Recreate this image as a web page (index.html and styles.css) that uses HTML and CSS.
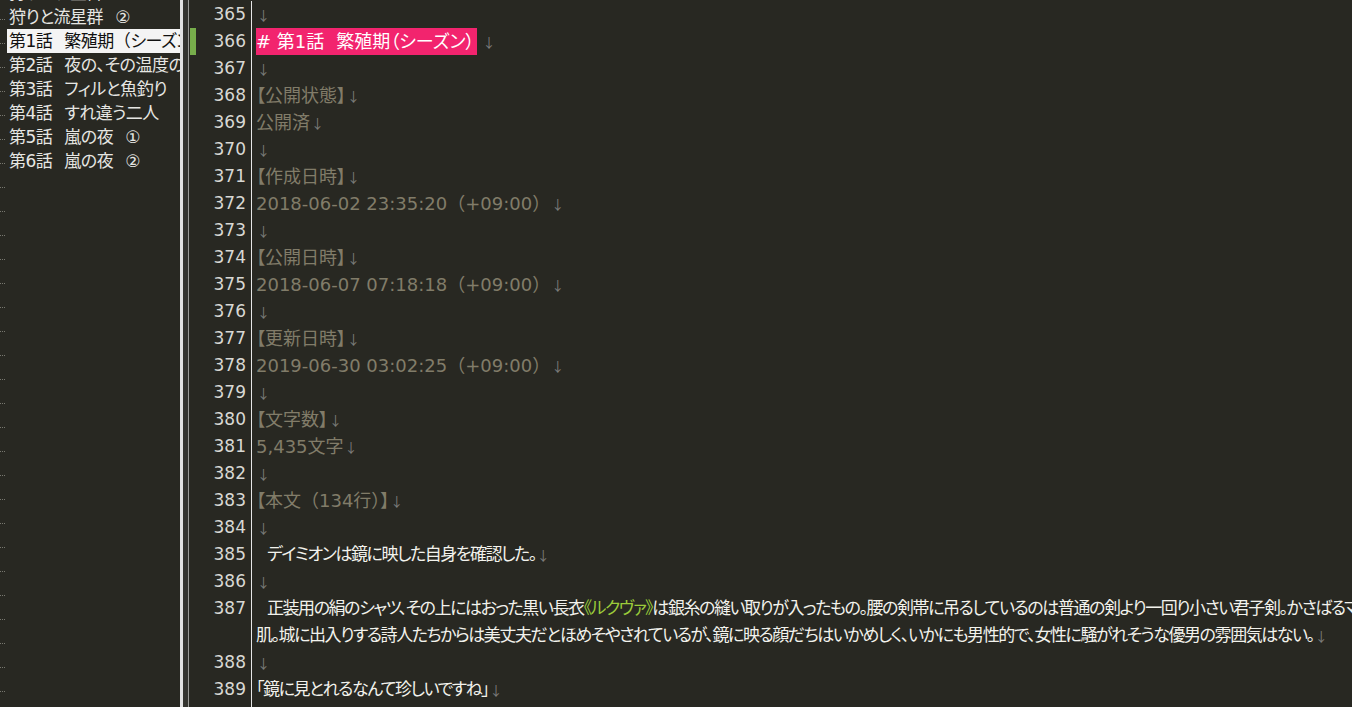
FILE: index.html
```html
<!DOCTYPE html>
<html lang="ja">
<head>
<meta charset="utf-8">
<title>Editor</title>
<link rel="stylesheet" href="styles.css">
</head>
<body>
<div class="app">
  <aside class="outline">
    <div class="orow"><span class="dots"></span><span class="otext">狩りと流星群<span class="isp">　</span>①</span></div>
    <div class="orow"><span class="dots"></span><span class="otext">狩りと流星群<span class="isp">　</span>②</span></div>
    <div class="orow selected"><span class="dots"></span><span class="otext">第1話<span class="isp">　</span>繁殖期<span class="fw">（</span>シーズン）</span></div>
    <div class="orow"><span class="dots"></span><span class="otext">第2話<span class="isp">　</span>夜の、その温度の</span></div>
    <div class="orow"><span class="dots"></span><span class="otext">第3話<span class="isp">　</span>フィルと魚釣り</span></div>
    <div class="orow"><span class="dots"></span><span class="otext">第4話<span class="isp">　</span>すれ違う二人</span></div>
    <div class="orow"><span class="dots"></span><span class="otext">第5話<span class="isp">　</span>嵐の夜<span class="isp">　</span>①</span></div>
    <div class="orow"><span class="dots"></span><span class="otext">第6話<span class="isp">　</span>嵐の夜<span class="isp">　</span>②</span></div>
    <div class="orow"><span class="dots"></span></div>
    <div class="orow"><span class="dots"></span></div>
    <div class="orow"><span class="dots"></span></div>
    <div class="orow"><span class="dots"></span></div>
    <div class="orow"><span class="dots"></span></div>
    <div class="orow"><span class="dots"></span></div>
    <div class="orow"><span class="dots"></span></div>
    <div class="orow"><span class="dots"></span></div>
    <div class="orow"><span class="dots"></span></div>
    <div class="orow"><span class="dots"></span></div>
    <div class="orow"><span class="dots"></span></div>
    <div class="orow"><span class="dots"></span></div>
    <div class="orow"><span class="dots"></span></div>
    <div class="orow"><span class="dots"></span></div>
    <div class="orow"><span class="dots"></span></div>
    <div class="orow"><span class="dots"></span></div>
    <div class="orow"><span class="dots"></span></div>
    <div class="orow"><span class="dots"></span></div>
    <div class="orow"><span class="dots"></span></div>
    <div class="orow"><span class="dots"></span></div>
    <div class="orow"><span class="dots"></span></div>
    <div class="orow"><span class="dots"></span></div>
    <div class="orow"><span class="dots"></span></div>
  </aside>
  <div class="splitter"><span class="sp-a"></span><span class="sp-b"></span><span class="sp-c"></span></div>
  <main class="editor">
    <div class="line"><div class="gutter"><span class="ln">365</span></div><div class="text"><span class="eol">↓</span></div></div>
    <div class="line current"><div class="gutter"><span class="mark"></span><span class="ln">366</span></div><div class="text"><span class="heading"># 第1話<span class="hsp">　</span>繁殖期（シーズン）</span><span class="eol after-heading">↓</span></div></div>
    <div class="line"><div class="gutter"><span class="ln">367</span></div><div class="text"><span class="eol">↓</span></div></div>
    <div class="line"><div class="gutter"><span class="ln">368</span></div><div class="text meta">【公開状態】<span class="eol">↓</span></div></div>
    <div class="line"><div class="gutter"><span class="ln">369</span></div><div class="text meta">公開済<span class="eol">↓</span></div></div>
    <div class="line"><div class="gutter"><span class="ln">370</span></div><div class="text"><span class="eol">↓</span></div></div>
    <div class="line"><div class="gutter"><span class="ln">371</span></div><div class="text meta">【作成日時】<span class="eol">↓</span></div></div>
    <div class="line"><div class="gutter"><span class="ln">372</span></div><div class="text meta">2018-06-02 23:35:20<span class="fw">（+09:00）</span><span class="eol">↓</span></div></div>
    <div class="line"><div class="gutter"><span class="ln">373</span></div><div class="text"><span class="eol">↓</span></div></div>
    <div class="line"><div class="gutter"><span class="ln">374</span></div><div class="text meta">【公開日時】<span class="eol">↓</span></div></div>
    <div class="line"><div class="gutter"><span class="ln">375</span></div><div class="text meta">2018-06-07 07:18:18<span class="fw">（+09:00）</span><span class="eol">↓</span></div></div>
    <div class="line"><div class="gutter"><span class="ln">376</span></div><div class="text"><span class="eol">↓</span></div></div>
    <div class="line"><div class="gutter"><span class="ln">377</span></div><div class="text meta">【更新日時】<span class="eol">↓</span></div></div>
    <div class="line"><div class="gutter"><span class="ln">378</span></div><div class="text meta">2019-06-30 03:02:25<span class="fw">（+09:00）</span><span class="eol">↓</span></div></div>
    <div class="line"><div class="gutter"><span class="ln">379</span></div><div class="text"><span class="eol">↓</span></div></div>
    <div class="line"><div class="gutter"><span class="ln">380</span></div><div class="text meta">【文字数】<span class="eol">↓</span></div></div>
    <div class="line"><div class="gutter"><span class="ln">381</span></div><div class="text meta">5,435文字<span class="eol">↓</span></div></div>
    <div class="line"><div class="gutter"><span class="ln">382</span></div><div class="text"><span class="eol">↓</span></div></div>
    <div class="line"><div class="gutter"><span class="ln">383</span></div><div class="text meta">【本文<span class="fw">（134行）</span>】<span class="eol">↓</span></div></div>
    <div class="line"><div class="gutter"><span class="ln">384</span></div><div class="text"><span class="eol">↓</span></div></div>
    <div class="line"><div class="gutter"><span class="ln">385</span></div><div class="text body"><span class="ind">　</span>デイミオンは鏡に映した自身を確認した。<span class="eol">↓</span></div></div>
    <div class="line"><div class="gutter"><span class="ln">386</span></div><div class="text"><span class="eol">↓</span></div></div>
    <div class="line wrapped"><div class="gutter"><span class="ln">387</span></div><div class="text body"><div class="vline"><span class="ind">　</span>正装用の絹のシャツ、その上にはおった黒い長衣<span class="ruby">《ルクヴァ》</span>は銀糸の縫い取りが入ったもの。腰の剣帯に吊るしているのは普通の剣より一回り小さい君子剣。かさばるマントは身につけず、褐色の</div><div class="vline">肌。城に出入りする詩人たちからは美丈夫だとほめそやされているが、鏡に映る顔だちはいかめしく、いかにも男性的で、女性に騒がれそうな優男の雰囲気はない。<span class="eol">↓</span></div></div></div>
    <div class="line"><div class="gutter"><span class="ln">388</span></div><div class="text"><span class="eol">↓</span></div></div>
    <div class="line"><div class="gutter"><span class="ln">389</span></div><div class="text body">「鏡に見とれるなんて珍しいですね」<span class="eol">↓</span></div></div>
    <div class="line"><div class="gutter"><span class="ln">390</span></div><div class="text"><span class="eol">↓</span></div></div>
  </main>
</div>
</body>
</html>
```
FILE: styles.css
```css
html, body {
  margin: 0;
  padding: 0;
  background: #282822;
  overflow: hidden;
  width: 1352px;
  height: 707px;
}

body {
  font-family: "DejaVu Sans", "Noto Sans CJK JP", sans-serif;
  font-feature-settings: "palt";
  color: #f2f2ec;
}

.app {
  display: flex;
  height: 707px;
  overflow: hidden;
}

/* ---------- outline pane ---------- */
.outline {
  width: 180px;
  flex: none;
  overflow: hidden;
  background: #282822;
}

.orow {
  display: flex;
  align-items: center;
  height: 24px;
  white-space: nowrap;
  font-size: 17px;
  letter-spacing: -0.5px;
  color: #e6e6e2;
}

.orow:first-child {
  margin-top: -19px;
}

.dots {
  width: 5px;
  height: 0;
  flex: none;
  margin-right: 2px;
  margin-top: 5px;
  border-top: 1px dotted #77776f;
}

.otext {
  padding-left: 2px;
  flex: 1;
  overflow: hidden;
  line-height: 24px;
}

.orow.selected .otext {
  background: #f4f4f4;
  color: #111;
}

.isp {
  letter-spacing: -5px;
}

/* ---------- splitter ---------- */
.splitter {
  width: 9px;
  flex: none;
  display: flex;
}

.sp-a { width: 3px; background: #e2e2e2; }
.sp-b { width: 5px; background: #34342f; }
.sp-c { width: 1px; background: #9a9a96; }

/* ---------- editor ---------- */
.editor {
  flex: 1;
  min-width: 0;
  padding-top: 1px;
  font-size: 18px;
}

.line {
  display: flex;
  height: 27px;
  overflow: hidden;
}

.line.wrapped {
  height: 54px;
}

.gutter {
  width: 63px;
  flex: none;
  display: flex;
  align-items: flex-start;
  border-right: 1.5px solid #e6e6e6;
  box-sizing: border-box;
}

.mark {
  width: 6px;
  height: 27px;
  margin-left: 1px;
  background: #77ad4b;
  flex: none;
}

.ln {
  margin-left: auto;
  padding-right: 5px;
  font-size: 17px;
  line-height: 27px;
  color: #d8d8d4;
}

.text {
  padding-left: 4px;
  height: 27px;
  line-height: 27px;
  white-space: nowrap;
  min-width: 0;
}

.line.wrapped .text {
  height: 54px;
}

.meta {
  color: #817c69;
}

.fw {
  font-feature-settings: normal;
}

.body {
  color: #f2f2ec;
  font-size: 17px;
  letter-spacing: -1.45px;
}

.ind {
  letter-spacing: -6px;
}

.ruby {
  color: #9bcc3a;
}

.eol {
  font-family: "Noto Sans CJK JP", sans-serif;
  font-size: 13px;
  letter-spacing: 0;
  color: #7c7c7a;
  margin-left: 1px;
  vertical-align: top;
  line-height: 27px;
}

.eol.after-heading {
  margin-left: 5px;
}

.heading {
  display: inline-block;
  vertical-align: top;
  background: #f2246e;
  color: #ffffff;
  height: 27px;
  line-height: 27px;
  padding-right: 3px;
}

.hsp {
  letter-spacing: -6px;
}

.vline {
  height: 27px;
  line-height: 27px;
}
```
